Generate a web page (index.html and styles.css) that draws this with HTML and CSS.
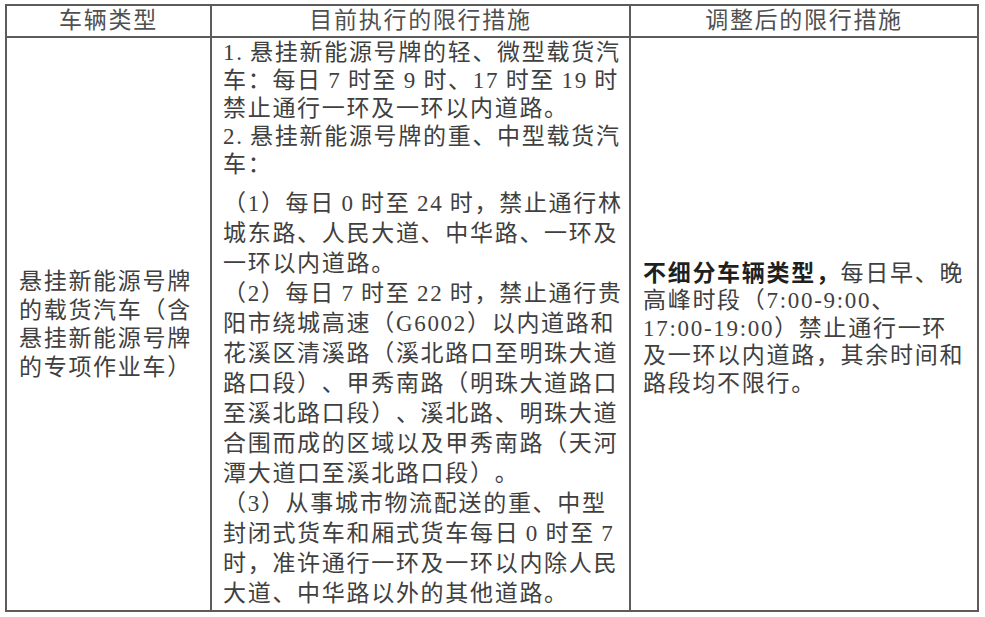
FILE: index.html
```html
<!DOCTYPE html>
<html lang="zh-CN">
<head>
<meta charset="utf-8">
<title>新能源货车限行措施调整</title>
<link rel="stylesheet" href="styles.css">
</head>
<body>
<table class="grid">
  <colgroup>
    <col class="col-type">
    <col class="col-current">
    <col class="col-adjusted">
  </colgroup>
  <thead>
    <tr class="head-row">
      <th>车辆类型</th>
      <th>目前执行的限行措施</th>
      <th>调整后的限行措施</th>
    </tr>
  </thead>
  <tbody>
    <tr class="body-row">
      <td class="cell-type">悬挂新能源号牌<br>的载货汽车（含<br>悬挂新能源号牌<br>的专项作业车）</td>
      <td class="cell-current">
        <p class="para para-light">1. 悬挂新能源号牌的轻、微型载货汽<br>车：每日 7 时至 9 时、17 时至 19 时<br>禁止通行一环及一环以内道路。</p>
        <p class="para para-light">2. 悬挂新能源号牌的重、中型载货汽<br>车：</p>
        <p class="para para-loose first-loose">（1）每日 0 时至 24 时，禁止通行林<br>城东路、人民大道、中华路、一环及<br>一环以内道路。</p>
        <p class="para para-loose">（2）每日 7 时至 22 时，禁止通行贵<br>阳市绕城高速（G6002）以内道路和<br>花溪区清溪路（溪北路口至明珠大道<br>路口段）、甲秀南路（明珠大道路口<br>至溪北路口段）、溪北路、明珠大道<br>合围而成的区域以及甲秀南路（天河<br>潭大道口至溪北路口段）。</p>
        <p class="para para-loose">（3）从事城市物流配送的重、中型<br>封闭式货车和厢式货车每日 0 时至 7<br>时，准许通行一环及一环以内除人民<br>大道、中华路以外的其他道路。</p>
      </td>
      <td class="cell-adjusted"><strong class="lead">不细分车辆类型，</strong>每日早、晚<br>高峰时段（7:00-9:00、<br>17:00-19:00）禁止通行一环<br>及一环以内道路，其余时间和<br>路段均不限行。</td>
    </tr>
  </tbody>
</table>
</body>
</html>
```

FILE: styles.css
```css
html, body {
  margin: 0;
  padding: 0;
  background: #ffffff;
}

body {
  padding: 4px 0 0 5px;
  font-family: "Liberation Serif", "Noto Sans CJK SC", serif;
  color: #404040;
  font-size: 23px;
  letter-spacing: 1.7px;
  word-spacing: -1px;
  text-spacing-trim: space-all;
}

.grid {
  width: 972px;
  height: 608px;
  border-collapse: collapse;
  table-layout: fixed;
}

.col-type { width: 205px; }
.col-current { width: 419px; }
.col-adjusted { width: 348px; }

.grid th,
.grid td {
  border: 2px solid #5c5c5c;
  vertical-align: middle;
}

.head-row { height: 32px; }

.grid th {
  font-weight: 400;
  color: #505050;
  text-align: center;
  padding: 0;
  line-height: 28px;
}

.cell-type {
  padding: 2px 0 0 12px;
  line-height: 28.5px;
}

.cell-current {
  padding: 0 0 0 11px;
  vertical-align: top;
}

.para {
  margin: 0;
  white-space: nowrap;
}

.para-light { line-height: 28px; }
.para-loose { line-height: 30px; }
.first-loose { margin-top: 10px; }

.cell-adjusted {
  padding: 9px 0 0 12px;
  line-height: 27.5px;
}

.lead {
  font-weight: 700;
  color: #1f1f1f;
}
```
